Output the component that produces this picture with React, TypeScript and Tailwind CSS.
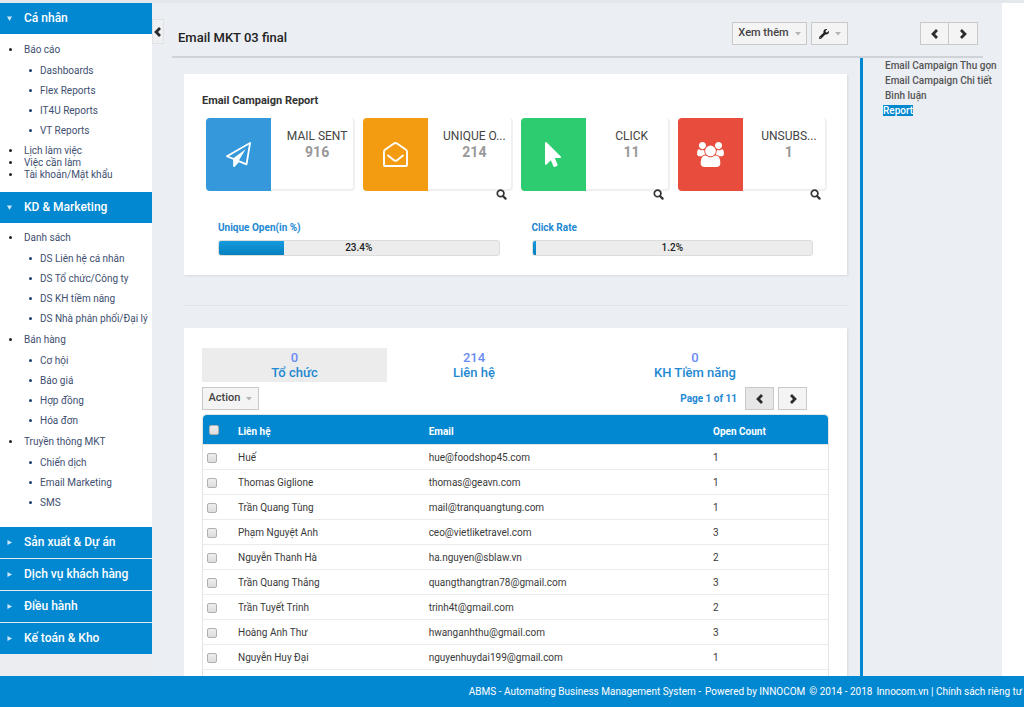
import React from "react";
import { FaWrench } from "react-icons/fa";

type Group = { label: string; items: string[] };

const personalGroups: Group[] = [
  { label: "Báo cáo", items: ["Dashboards", "Flex Reports", "IT4U Reports", "VT Reports"] },
];
const personalLinks = ["Lịch làm việc", "Việc cần làm", "Tài khoản/Mật khẩu"];
const marketingGroups: Group[] = [
  {
    label: "Danh sách",
    items: ["DS Liên hệ cá nhân", "DS Tổ chức/Công ty", "DS KH tiềm năng", "DS Nhà phân phối/Đại lý"],
  },
  { label: "Bán hàng", items: ["Cơ hội", "Báo giá", "Hợp đồng", "Hóa đơn"] },
  { label: "Truyền thông MKT", items: ["Chiến dịch", "Email Marketing", "SMS"] },
];
const closedSections = ["Sản xuất & Dự án", "Dịch vụ khách hàng", "Điều hành", "Kế toán & Kho"];

const contacts = [
  { name: "Huế", email: "hue@foodshop45.com", count: 1 },
  { name: "Thomas Giglione", email: "thomas@geavn.com", count: 1 },
  { name: "Trần Quang Tùng", email: "mail@tranquangtung.com", count: 1 },
  { name: "Phạm Nguyệt Anh", email: "ceo@vietliketravel.com", count: 3 },
  { name: "Nguyễn Thanh Hà", email: "ha.nguyen@sblaw.vn", count: 2 },
  { name: "Trần Quang Thắng", email: "quangthangtran78@gmail.com", count: 3 },
  { name: "Trần Tuyết Trinh", email: "trinh4t@gmail.com", count: 2 },
  { name: "Hoàng Anh Thư", email: "hwanganhthu@gmail.com", count: 3 },
  { name: "Nguyễn Huy Đại", email: "nguyenhuydai199@gmail.com", count: 1 },
];

function Chevron({ dir }: { dir: "left" | "right" }) {
  return (
    <svg viewBox="0 0 10 12" className="h-3 w-2.5" fill="none" stroke="#2b2b2b" strokeWidth="2.8" aria-hidden="true">
      <path d={dir === "left" ? "M7 2.100 L3.100 6 L7 9.900" : "M3 2.100 L6.900 6 L3 9.900"} />
    </svg>
  );
}

function Caret() {
  return (
    <svg viewBox="0 0 6 4" className="h-1 w-1.5" fill="#b5b5b5" aria-hidden="true">
      <path d="M0 0h6L3 3.6z" />
    </svg>
  );
}

function SearchIcon() {
  return (
    <svg viewBox="0 0 11 11" className="size-[11px]" fill="none" stroke="#333" aria-hidden="true">
      <circle cx="4.6" cy="4.4" r="3.3" strokeWidth="1.7" />
      <path d="M7.2 7.2 L9.600 9.600" strokeWidth="2.2" strokeLinecap="round" />
    </svg>
  );
}

function PlaneIcon() {
  return (
    <svg viewBox="0 0 1792 1792" className="size-[25px]" fill="#fff" aria-hidden="true">
      <path d="M1764 11q33 24 27 64l-256 1536q-5 29-32 45-14 8-31 8-11 0-24-5l-527-215-298 327q-18 21-47 21-14 0-23-4-19-7-30-23.500t-11-36.500v-452l-472-193q-37-14-40-55-3-39 32-59l1664-960q35-21 68 2zm-342 1499l221-1323-1434 827 336 137 863-639-478 797z" />
    </svg>
  );
}

function OpenEnvelopeIcon() {
  return (
    <svg viewBox="0 0 25 25" className="size-[25px]" fill="none" stroke="#fff" strokeWidth="1.9" strokeLinejoin="round" strokeLinecap="round" aria-hidden="true">
      <path d="M1 23V9.600C1 8.800 1.300 8.300 2 7.800L10.600 1.700C11.900.8 13.100.8 14.400 1.700L23 7.800C23.700 8.300 24 8.800 24 9.600V23C24 23.700 23.700 24 23 24H2C1.300 24 1 23.700 1 23Z" />
      <path d="M5 13.600L10.600 18.100C11.900 19.100 13.100 19.100 14.400 18.100L20 13.600" />
    </svg>
  );
}

function PointerIcon() {
  return (
    <svg viewBox="0 0 1152 1792" className="h-[25px] w-4" fill="#fff" aria-hidden="true">
      <path d="M1133 1043q31 30 14 69-17 40-59 40h-382l201 476q10 25 0 49t-34 35l-177 75q-25 10-49 0t-35-34l-191-452-312 312q-19 19-45 19-12 0-24-5-40-17-40-59v-1504q0-42 40-59 12-5 24-5 27 0 45 19z" />
    </svg>
  );
}

function UsersIcon() {
  return (
    <svg viewBox="0 0 1920 1792" className="h-[25px] w-[27px]" fill="#fff" aria-hidden="true">
      <path d="M593 896q-162 5-265 128h-134q-82 0-138-40.500t-56-118.500q0-353 124-353 6 0 43.500 21t97.500 42.500 119 21.500q67 0 133-23-5 37-5 66 0 139 81 256zm1071 637q0 120-73 189.500t-194 69.500h-874q-121 0-194-69.500t-73-189.500q0-53 3.500-103.500t14-109 26.500-108.500 43-97.500 62-81 85.500-53.500 111.500-20q10 0 43 21.500t73 48 107 48 135 21.500 135-21.500 107-48 73-48 43-21.500q61 0 111.500 20t85.500 53.500 62 81 43 97.500 26.500 108.500 14 109 3.500 103.500zm-1024-1277q0 106-75 181t-181 75-181-75-75-181 75-181 181-75 181 75 75 181zm704 384q0 159-112.500 271.500t-271.500 112.500-271.500-112.500-112.500-271.500 112.500-271.500 271.500-112.500 271.500 112.500 112.500 271.500zm576 225q0 78-56 118.500t-138 40.500h-134q-103-123-265-128 81-117 81-256 0-29-5-66 66 23 133 23 59 0 119-21.500t97.500-42.500 43.500-21q124 0 124 353zm-128-609q0 106-75 181t-181 75-181-75-75-181 75-181 181-75 181 75 75 181z" />
    </svg>
  );
}

function SectionHeader({ label, open }: { label: string; open?: boolean }) {
  return (
    <button
      type="button"
      aria-expanded={!!open}
      className="flex h-[31px] w-full items-center bg-[#0288d1] pb-0.5 pl-[7px] text-left text-[12px] font-medium text-white"
    >
      <svg viewBox="0 0 6 6" className="mt-0.5 mr-3 size-[5px] opacity-80" fill="#fff" aria-hidden="true">
        <path d={open ? "M0 0.500h6L3 6z" : "M0.500 0v6L6 3z"} />
      </svg>
      {label}
    </button>
  );
}

function Bullet({ nested }: { nested?: boolean }) {
  return (
    <span
      className={
        nested
          ? "mr-2 ml-[29px] size-[3px] shrink-0 rounded-full bg-[#1c3f70]"
          : "mr-3 ml-[9px] size-[3px] shrink-0 rounded-full bg-[#222]"
      }
    />
  );
}

function NavGroups({ groups }: { groups: Group[] }) {
  return (
    <ul>
      {groups.map((g) => (
        <li key={g.label}>
          <a href="#" className="flex h-[22px] items-center whitespace-nowrap">
            <Bullet />
            {g.label}
          </a>
          <ul>
            {g.items.map((item) => (
              <li key={item}>
                <a href="#" className="flex h-5 items-center whitespace-nowrap">
                  <Bullet nested />
                  {item}
                </a>
              </li>
            ))}
          </ul>
        </li>
      ))}
    </ul>
  );
}

function Stat({ color, icon, label, value, zoom }: { color: string; icon: React.ReactNode; label: string; value: string; zoom?: boolean }) {
  return (
    <div className="flex min-w-0 flex-col">
      <div className="flex h-[73px] rounded-sm border-r-2 border-b-2 border-[#f0f0f0]">
        <div className={`flex h-[73px] w-[65px] shrink-0 items-center justify-center rounded-l-sm ${color}`}>{icon}</div>
        <div className="min-w-0 flex-1 pt-2.5 pr-1 pl-3.5 text-center">
          <div className="text-[12px] leading-4 whitespace-nowrap text-[#444]">{label}</div>
          <div className="text-[14px] leading-4 font-bold text-[#999]">{value}</div>
        </div>
      </div>
      {zoom && (
        <button type="button" aria-label={`Xem ${label}`} className="-mt-0.5 mr-1.5 self-end">
          <SearchIcon />
        </button>
      )}
    </div>
  );
}

function Meter({ label, percent }: { label: string; percent: number }) {
  return (
    <div>
      <div className="text-[10px] leading-4 font-bold text-[#1e88d2]">{label}</div>
      <div
        role="progressbar"
        aria-label={label}
        aria-valuenow={percent}
        className="relative mt-1 h-4 overflow-hidden rounded-[3px] border border-[#dcdcdc] bg-[#ececec]"
      >
        <div className="h-full bg-linear-to-b from-[#149bdf] to-[#0480be]" style={{ width: `${percent}%` }} />
        <span className="absolute inset-0 text-center text-[10px] leading-[14px] font-medium text-[#222]">{percent}%</span>
      </div>
    </div>
  );
}

const btn = "flex items-center justify-center border border-[#c9c9c9] text-[11px] font-medium text-[#444]";
const box = "block size-[10px] appearance-none rounded-[2px] border border-[#b0b0b0] bg-linear-to-b from-[#eee] to-[#ddd]";

export default function App() {
  return (
    <div className="flex h-screen flex-col overflow-hidden bg-[#ebeef3] font-['Roboto','Liberation_Sans',sans-serif] text-[10px] text-[#3a3a3a]">
      <div className="h-[3px] shrink-0 bg-[#e4e7ec]" />
      <div className="flex min-h-0 flex-1">
        <nav className="w-[152px] shrink-0 overflow-hidden bg-[#ecedf1] text-[#414f70]">
          <div className="bg-white">
            <SectionHeader label="Cá nhân" open />
            <div className="pt-1 pb-3">
              <NavGroups groups={personalGroups} />
              <ul className="pt-1">
                {personalLinks.map((l) => (
                  <li key={l}>
                    <a href="#" className="flex h-3 items-center">
                      <Bullet />
                      {l}
                    </a>
                  </li>
                ))}
              </ul>
            </div>
            <SectionHeader label="KD & Marketing" open />
            <div className="pt-[3px] pb-[15px]">
              <NavGroups groups={marketingGroups} />
            </div>
            <div className="flex flex-col gap-px bg-[#e6eaf0]">
              {closedSections.map((s) => (
                <SectionHeader key={s} label={s} />
              ))}
            </div>
          </div>
        </nav>

        <div className="w-5 shrink-0 pt-4">
          <button type="button" aria-label="Thu gọn menu" className="flex h-[25px] w-3 items-center justify-center border border-[#dfe1e4] bg-[#eff0f2]">
            <Chevron dir="left" />
          </button>
        </div>

        <div className="flex min-w-0 flex-1 flex-col">
          <header className="mr-[19px] flex h-[55px] shrink-0 items-center border-b-2 border-[#cfd2d6] pt-2 pr-[5px] pl-1.5">
            <h1 className="flex-1 pt-2 text-[13px] font-medium text-[#222]">Email MKT 03 final</h1>
            <div className="flex gap-1">
              <button type="button" className={`${btn} h-[23px] w-[75px] gap-1.5 bg-[#f4f4f4]`}>
                Xem thêm <Caret />
              </button>
              <button type="button" aria-label="Công cụ" className={`${btn} h-[23px] w-[37px] gap-1.5 bg-[#f4f4f4]`}>
                <FaWrench className="size-[10px] text-[#222]" /> <Caret />
              </button>
            </div>
            <div className="ml-[72px] flex">
              <button type="button" aria-label="Trước" className={`${btn} h-[23px] w-[29px] bg-[#f4f4f4]`}>
                <Chevron dir="left" />
              </button>
              <button type="button" aria-label="Sau" className={`${btn} h-[23px] w-[29px] border-l-0 bg-[#f4f4f4]`}>
                <Chevron dir="right" />
              </button>
            </div>
          </header>

          <div className="flex min-h-0 flex-1">
            <main className="min-w-0 flex-1 overflow-hidden pt-4 pr-[13px] pl-3">
              <section className="h-[201px] bg-white px-[18px] pt-[19px] shadow-[1px_1px_2px_#d8dade]">
                <h2 className="text-[11px] leading-4 font-bold text-[#333]">Email Campaign Report</h2>
                <div className="mt-[9px] grid grid-cols-4 gap-2 pr-0.5 pl-1">
                  <Stat color="bg-[#3498db]" icon={<PlaneIcon />} label="MAIL SENT" value="916" />
                  <Stat color="bg-[#f39c12]" icon={<OpenEnvelopeIcon />} label="UNIQUE O..." value="214" zoom />
                  <Stat color="bg-[#2ecc71]" icon={<PointerIcon />} label="CLICK" value="11" zoom />
                  <Stat color="bg-[#e74c3c]" icon={<UsersIcon />} label="UNSUBS..." value="1" zoom />
                </div>
                <div className="mt-5 grid grid-cols-2 gap-8 px-4">
                  <Meter label="Unique Open(in %)" percent={23.4} />
                  <Meter label="Click Rate" percent={1.2} />
                </div>
              </section>

              <hr className="mt-[30px] mb-[22px] border-[#dfe2e6]" />

              <section className="bg-white px-[18px] pt-5 shadow-[1px_1px_2px_#d8dade]">
                <div className="grid grid-cols-[185fr_174fr_268fr] text-center text-[13px] leading-[15px] font-medium text-[#1e88d2]">
                  {[
                    ["0", "Tổ chức"],
                    ["214", "Liên hệ"],
                    ["0", "KH Tiềm năng"],
                  ].map(([n, l], i) => (
                    <button type="button" key={l} className={i === 0 ? "h-[34px] bg-[#ececec]" : "h-[34px]"}>
                      <span className="block text-[#6b8cf5]">{n}</span>
                      <span className="block">{l}</span>
                    </button>
                  ))}
                </div>
                <div className="mt-[5px] flex items-center pr-[22px]">
                  <button type="button" className={`${btn} h-[23px] w-[57px] gap-1.5 bg-[#f4f4f4]`}>
                    Action <Caret />
                  </button>
                  <span className="ml-auto text-[10px] font-bold text-[#1e88d2]">Page 1 of 11</span>
                  <button type="button" aria-label="Trang trước" className={`${btn} ml-2 h-[23px] w-[29px] bg-[#e6e6e6]`}>
                    <Chevron dir="left" />
                  </button>
                  <button type="button" aria-label="Trang sau" className={`${btn} ml-1 h-[23px] w-[29px] bg-[#f4f4f4]`}>
                    <Chevron dir="right" />
                  </button>
                </div>
                <table className="mt-1 w-full table-fixed border-separate border-spacing-0 rounded-t border border-[#e4e4e4] text-left">
                  <colgroup>
                    <col className="w-[35px]" />
                    <col className="w-[30.5%]" />
                    <col className="w-[45.5%]" />
                    <col />
                  </colgroup>
                  <thead>
                    <tr className="h-[30px] text-white">
                      <th className="rounded-tl border-b border-[#e4e4e4] bg-[#0288d1] pl-1.5">
                        <input type="checkbox" aria-label="Chọn tất cả" className={box} />
                      </th>
                      <th className="border-b border-[#e4e4e4] bg-[#0288d1] pt-1 font-bold">Liên hệ</th>
                      <th className="border-b border-[#e4e4e4] bg-[#0288d1] pt-1 font-bold">Email</th>
                      <th className="rounded-tr border-b border-[#e4e4e4] bg-[#0288d1] pt-1 font-bold">Open Count</th>
                    </tr>
                  </thead>
                  <tbody>
                    {contacts.map((c) => (
                      <tr key={c.email} className="h-[25px]">
                        <td className="border-b border-[#ebebeb] pt-0.5 pl-1">
                          <input type="checkbox" aria-label={`Chọn ${c.name}`} className={box} />
                        </td>
                        <td className="border-b border-[#ebebeb]">{c.name}</td>
                        <td className="border-b border-[#ebebeb]">{c.email}</td>
                        <td className="border-b border-[#ebebeb]">{c.count}</td>
                      </tr>
                    ))}
                    <tr className="h-[25px]">
                      <td colSpan={4} />
                    </tr>
                  </tbody>
                </table>
              </section>
            </main>

            <aside className="w-[142px] shrink-0 border-l-3 border-[#0288d1] pl-5">
              <ul className="text-[10px] leading-[15px] font-medium whitespace-nowrap text-[#555]">
                <li><a href="#" className="px-0.5">Email Campaign Thu gọn</a></li>
                <li><a href="#" className="px-0.5">Email Campaign Chi tiết</a></li>
                <li><a href="#" className="px-0.5">Bình luận</a></li>
                <li><a href="#" className="bg-[#0288d1] text-white">Report</a></li>
              </ul>
            </aside>
          </div>
        </div>
        <div className="w-[22px] shrink-0 bg-white" />
      </div>
      <footer className="flex h-[31px] shrink-0 items-center justify-end gap-1 bg-[#0288d1] pr-0.5 text-[10px] whitespace-nowrap text-white">
        <span>ABMS - Automating Business Management System -</span>
        <span>Powered by INNOCOM</span>
        <span>© 2014 - 2018</span>
        <span>
          <a href="#">Innocom.vn</a> | <a href="#">Chính sách riêng tư</a>
        </span>
      </footer>
    </div>
  );
}
